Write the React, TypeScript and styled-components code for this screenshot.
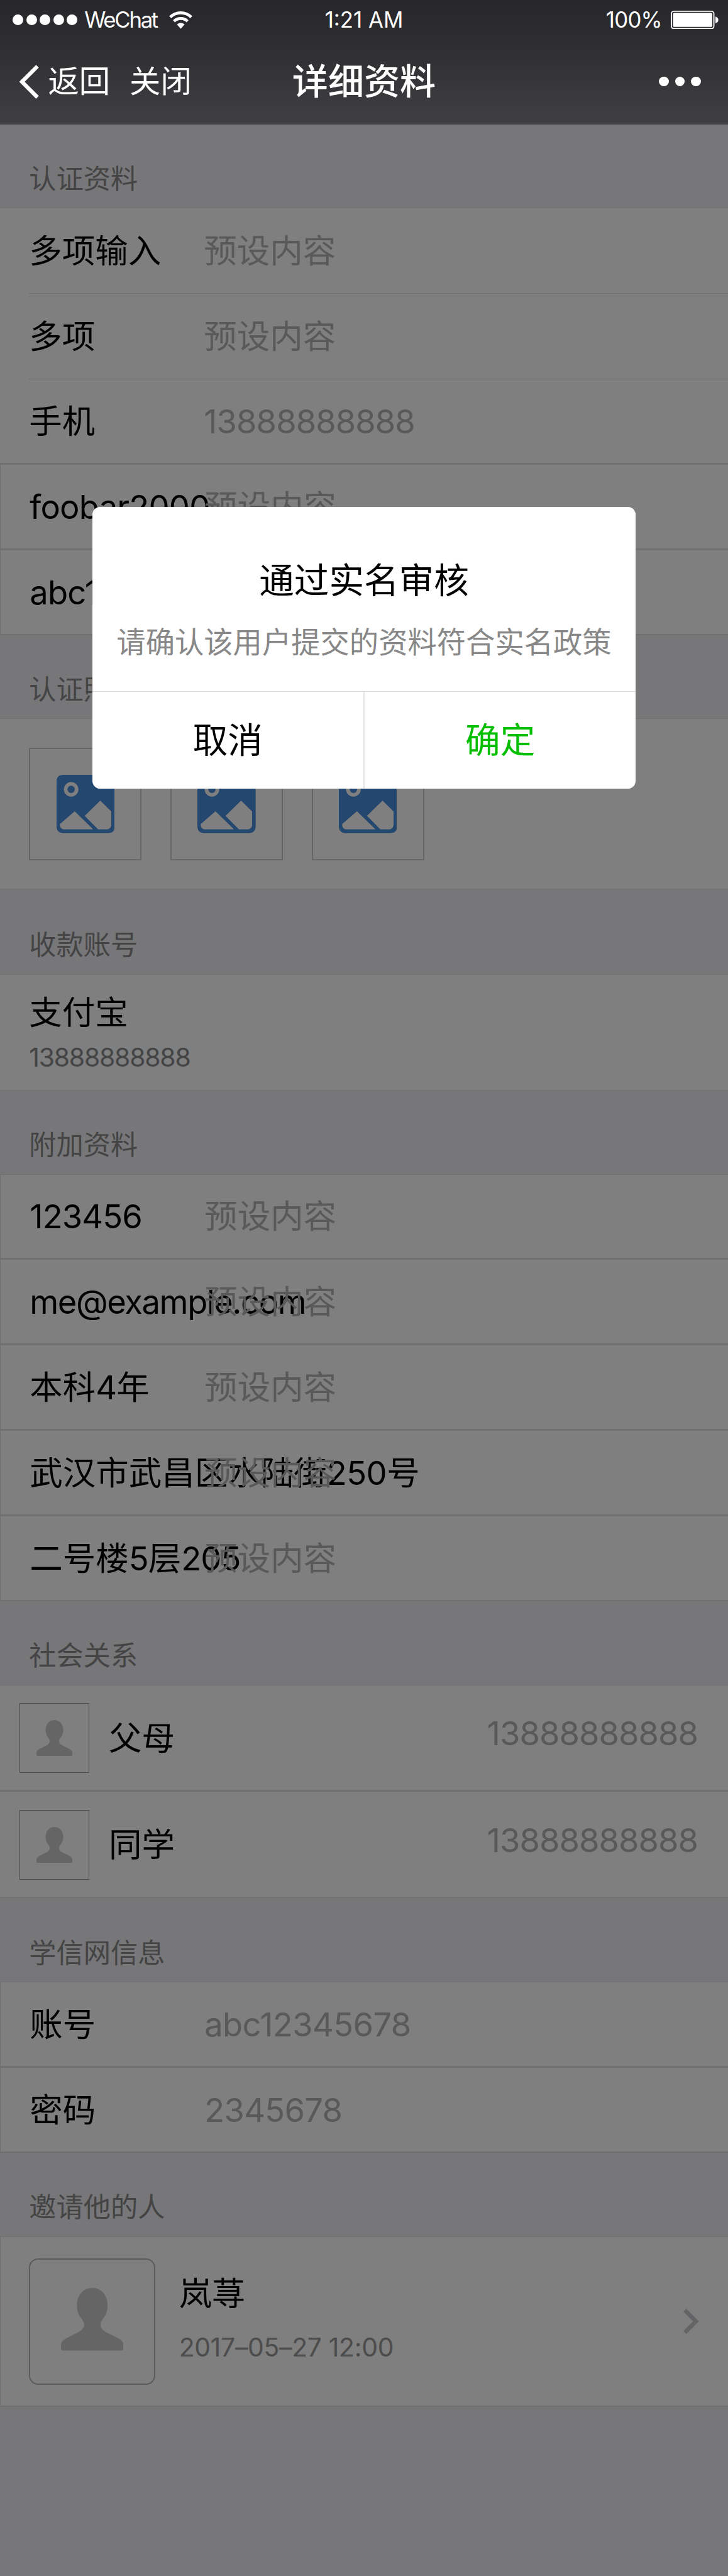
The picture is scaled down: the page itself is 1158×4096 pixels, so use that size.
import React from 'react';
import styled, { createGlobalStyle, css } from 'styled-components';

const SCALE = 0.772;
const u = (n: number) => `${+(n * SCALE).toFixed(3)}px`;

const GlobalStyle = createGlobalStyle`
  *, *::before, *::after { box-sizing: border-box; }
  html, body { margin: 0; padding: 0; background: #777779; }
  body {
    font-family: Inter, "Noto Sans CJK SC", sans-serif;
    color: #000;
    -webkit-font-smoothing: antialiased;
  }
`;

const Screen = styled.div`
  display: flex;
  flex-direction: column;
  width: 1158px;
  height: 4096px;
  overflow: hidden;
`;

/* ---------- top bar ---------- */

const Header = styled.header`
  flex: none;
  height: ${u(256)};
  background: linear-gradient(#27272b, #2e2e31 36%, #404044);
  color: #fff;
`;

const StatusBar = styled.div`
  display: grid;
  grid-template-columns: 1fr auto 1fr;
  align-items: center;
  height: ${u(82)};
  padding: 0 ${u(18)};
  font-size: ${u(45)};
  line-height: ${u(60)};
`;

const StatusGroup = styled.div<{ $end?: boolean }>`
  display: flex;
  align-items: center;
  justify-content: ${(p) => (p.$end ? 'flex-end' : 'flex-start')};
`;

const SignalDots = styled.div`
  display: flex;
  gap: ${u(6)};
  margin: 0 ${u(14)} 0 ${u(8)};
`;

const SignalDot = styled.i`
  width: ${u(22)};
  height: ${u(22)};
  border-radius: 50%;
  background: #fff;
`;

const StatusText = styled.span<{ $tracking: number }>`
  letter-spacing: ${(p) => p.$tracking}em;
  white-space: nowrap;
`;

const WifiIcon = styled.svg`
  width: ${u(48)};
  height: ${u(36)};
  margin-left: ${u(25)};
`;

const BatteryIcon = styled.svg`
  width: ${u(100)};
  height: ${u(38)};
  margin-left: ${u(18)};
`;

const NavBar = styled.nav`
  display: grid;
  grid-template-columns: 1fr auto 1fr;
  align-items: center;
  height: ${u(172)};
  padding: 0 ${u(40)};
`;

const NavActions = styled.div`
  display: flex;
  align-items: center;
  font-size: ${u(64)};
  line-height: ${u(80)};
`;

const BackIcon = styled.svg`
  width: ${u(40)};
  height: ${u(70)};
  margin-right: ${u(19)};
`;

const NavLink = styled.a`
  margin-right: ${u(40)};
  white-space: nowrap;
`;

const NavTitle = styled.h1`
  margin: 0;
  font-size: ${u(74)};
  font-weight: 500;
  line-height: ${u(90)};
`;

const MoreDots = styled.div`
  display: flex;
  justify-content: flex-end;
  gap: ${u(13)};
  margin-right: ${u(16)};
`;

const MoreDot = styled.i`
  width: ${u(20)};
  height: ${u(20)};
  border-radius: 50%;
  background: #fff;
`;

/* ---------- page ---------- */

const Page = styled.main`
  position: relative;
  flex: 1;
  background: #efeff4;
`;

const Mask = styled.div`
  position: absolute;
  inset: 0;
  background: rgba(0, 0, 0, 0.5);
`;

const SectionTitle = styled.h2`
  height: ${u(172)};
  margin: 0;
  padding: ${u(73)} 0 0 ${u(60)};
  font-size: ${u(56)};
  font-weight: 400;
  line-height: ${u(80)};
  color: #888;
`;

const cellBorders = css`
  border: solid #e0e0e0;
  border-width: 1px 0 2px 1px;
`;

const Cell = styled.div<{ $height: number; $flush?: boolean }>`
  display: flex;
  align-items: center;
  height: ${(p) => u(p.$height)};
  padding: 1px 0 0 ${u(60)};
  background: #fff;
  font-size: ${u(68)};
  line-height: ${u(96)};
  ${cellBorders}
  ${(p) => p.$flush && css`border-left-width: 0;`}
`;

const Divider = styled.hr`
  height: 1px;
  margin: 0 0 0 ${u(60)};
  border: 0;
  background: #e0e0e0;
`;

const PlainGroup = styled.section`
  background: #fff;
  border: solid #e0e0e0;
  border-width: 1px 0 2px;
`;

const PlainCell = styled.div<{ $last?: boolean }>`
  display: flex;
  align-items: center;
  height: ${(p) => (p.$last ? `calc(${u(176)} - 3px)` : `calc(${u(176)} - 1px)`)};
  padding-left: ${u(60)};
  font-size: ${u(68)};
  line-height: ${u(96)};
`;

const Label = styled.label`
  flex: none;
  width: ${u(360)};
  white-space: nowrap;
`;

const Value = styled.span`
  color: #b2b2b2;
  white-space: nowrap;
`;

const Latin = styled.span<{ $tracking: number }>`
  letter-spacing: ${(p) => p.$tracking}em;
`;

/* ---------- photos ---------- */

const PhotoStrip = styled.div`
  display: flex;
  gap: ${u(59)};
  height: ${u(352)};
  margin-bottom: ${u(2)};
  padding: ${u(59)} 0 0 ${u(60)};
  background: #fff;
  border: solid #e0e0e0;
  border-width: 1px 0;
`;

const PhotoBox = styled.div`
  display: flex;
  align-items: center;
  justify-content: center;
  width: ${u(232)};
  height: ${u(232)};
  border: 2px solid #ccc;
`;

const PhotoSvg = styled.svg`
  width: ${u(120)};
  height: ${u(120)};
`;

/* ---------- account ---------- */

const AccountCell = styled.div`
  height: ${u(240)};
  padding: ${u(31)} 0 0 ${u(60)};
  background: #fff;
  border: solid #e0e0e0;
  border-width: 1px 0;
`;

const AccountName = styled.div`
  font-size: ${u(68)};
  line-height: ${u(96)};
`;

const AccountNumber = styled.div`
  margin-top: ${u(4)};
  font-size: ${u(53)};
  line-height: ${u(80)};
  letter-spacing: -0.03em;
  color: #888;
`;

/* ---------- people ---------- */

const Avatar = styled.div<{ $large?: boolean }>`
  display: flex;
  flex: none;
  align-items: center;
  justify-content: center;
  width: ${(p) => u(p.$large ? 260 : 144)};
  height: ${(p) => u(p.$large ? 260 : 144)};
  border: ${(p) => (p.$large ? '2px solid #b8b8b8' : '1px solid #979797')};
  border-radius: ${(p) => (p.$large ? u(19) : 0)};
`;

const PersonSvg = styled.svg<{ $size: number; $lift?: number }>`
  width: ${(p) => u(p.$size)};
  height: ${(p) => u(p.$size)};
  margin-bottom: ${(p) => u(p.$lift ?? 0)};
`;

const RelationCell = styled(Cell)`
  padding: 1px ${u(62)} 0 ${u(40)};
`;

const RelationName = styled.span`
  flex: 1;
  margin-left: ${u(40)};
`;

const RelationPhone = styled(Value)`
  margin-bottom: ${u(20)};
`;

const InviterCell = styled(Cell)`
  padding-left: ${u(58.5)};
`;

const InviterText = styled.div`
  flex: 1;
  margin: 0 0 ${u(-12)} ${u(49)};
`;

const InviterName = styled.div`
  margin-top: ${u(-24)};
  line-height: ${u(96)};
`;

const InviterDate = styled.div`
  margin-top: ${u(23)};
  font-size: ${u(53)};
  line-height: ${u(80)};
  letter-spacing: -0.008em;
  color: #999;
`;

const ArrowIcon = styled.svg`
  width: ${u(32)};
  height: ${u(52)};
  margin-right: ${u(60)};
`;

/* ---------- dialog ---------- */

const Dialog = styled.div`
  position: absolute;
  top: ${u(788)};
  left: ${u(190)};
  display: flex;
  flex-direction: column;
  width: ${u(1120)};
  height: ${u(580)};
  border-radius: ${u(16)};
  background: #fff;
  text-align: center;
`;

const DialogBody = styled.div`
  height: ${u(380)};
  padding-top: ${u(101)};
`;

const DialogTitle = styled.div`
  font-size: ${u(72)};
  line-height: ${u(100)};
`;

const DialogText = styled.p`
  margin: ${u(33)} 0 0;
  font-size: ${u(60)};
  line-height: ${u(90)};
  white-space: nowrap;
  color: #888;
`;

const DialogActions = styled.div`
  display: flex;
  flex: 1;
  border-top: 1px solid #dcdcdc;
`;

const DialogButton = styled.button<{ $primary?: boolean }>`
  flex: 1;
  padding: 0 0 ${u(2)};
  border: 0;
  border-left: ${(p) => (p.$primary ? '2px solid #e5e5e5' : '0')};
  background: none;
  font: inherit;
  font-size: ${u(72)};
  line-height: ${u(100)};
  color: ${(p) => (p.$primary ? '#04be02' : '#000')};
`;

/* ---------- icons ---------- */

const Photo = () => (
  <PhotoBox>
    <PhotoSvg viewBox="0 0 120 120">
      <path
        fill="#478edc"
        fillRule="evenodd"
        d="M14 0H106Q120 0 120 14V106Q120 120 106 120H14Q0 120 0 106V14Q0 0 14 0ZM30 15A15 15 0 1 0 30 45A15 15 0 1 0 30 15ZM37.3 75L75.5 112.5H14Q8 111 7 105V101.5ZM90 53L112.7 75.5V104Q112 111 104.5 112.5H85.5L58 84.5Z"
      />
      <circle cx="30" cy="30" r="7.5" fill="#478edc" />
    </PhotoSvg>
  </PhotoBox>
);

const Person = ({ size, lift }: { size: number; lift?: number }) => (
  <PersonSvg $size={size} $lift={lift} viewBox="0 0 100 100">
    <path
      fill="#cacaca"
      d="M50 0C64 0 74.5 11 74.5 28C74.5 47 63 49 63 58.5C63 64 67 67 71 70L92 80.5C97 83.5 100 87 100 91V96Q100 100 96.5 100H3.5Q0 100 0 96V91C0 87 3 83.5 8 80.5L29 70C33 67 37 64 37 58.5C37 49 25.5 47 25.5 28C25.5 11 36 0 50 0Z"
    />
  </PersonSvg>
);

/* ---------- data ---------- */

interface Field {
  label: string;
  value: string;
  labelTrack?: number;
  valueTrack?: number;
}

const PRESET = '预设内容';

const basics: Field[] = [
  { label: '多项输入', value: PRESET },
  { label: '多项', value: PRESET },
  { label: '手机', value: '13888888888' },
];

const extraBasics: Field[] = [
  { label: 'foobar2000', value: PRESET, labelTrack: -0.015 },
  { label: 'abc123', value: PRESET, labelTrack: -0.015 },
];

const additional: Field[] = [
  { label: '123456', value: PRESET },
  { label: 'me@example.com', value: PRESET, labelTrack: -0.027 },
  { label: '本科4年', value: PRESET },
  { label: '武汉市武昌区水陆街250号', value: PRESET, labelTrack: -0.01 },
  { label: '二号楼5层205', value: PRESET },
];

const school: Field[] = [
  { label: '账号', value: 'abc12345678', valueTrack: -0.012 },
  { label: '密码', value: '2345678', valueTrack: -0.014 },
];

const relations = [
  { name: '父母', phone: '13888888888' },
  { name: '同学', phone: '13888888888' },
];

const splitLatin = (text: string, tracking = -0.018) =>
  text.split(/([\x21-\x7e]+)/).map((part, i) =>
    i % 2 ? (
      <Latin key={i} $tracking={tracking}>
        {part}
      </Latin>
    ) : (
      part
    ),
  );

const FieldContent = ({ label, value, labelTrack, valueTrack }: Field) => (
  <>
    <Label>{splitLatin(label, labelTrack)}</Label>
    <Value>{splitLatin(value, valueTrack)}</Value>
  </>
);

const BoxedFields = ({ fields }: { fields: Field[] }) => (
  <>
    {fields.map((f) => (
      <Cell key={f.label} $height={176}>
        <FieldContent {...f} />
      </Cell>
    ))}
  </>
);

export default function App() {
  return (
    <Screen>
      <GlobalStyle />
      <Header>
        <StatusBar>
          <StatusGroup>
            <SignalDots>
              {[0, 1, 2, 3, 4].map((i) => (
                <SignalDot key={i} />
              ))}
            </SignalDots>
            <StatusText $tracking={-0.066}>WeChat</StatusText>
            <WifiIcon viewBox="0 0 48 36">
              <g fill="none" stroke="#fff" strokeWidth="6">
                <path d="M2.2 12A31 31 0 0 1 45.8 12" />
                <path d="M10 20.5A20 20 0 0 1 38 20.5" />
              </g>
              <path fill="#fff" d="M24 36L16 27Q24 20.5 32 27Z" />
            </WifiIcon>
          </StatusGroup>
          <StatusText $tracking={0}>1:21 AM</StatusText>
          <StatusGroup $end>
            <StatusText $tracking={-0.02}>100%</StatusText>
            <BatteryIcon viewBox="0 0 100 38">
              <rect x="1.2" y="1.2" width="87.6" height="35.6" rx="5" fill="none" stroke="#fff" strokeWidth="2.4" />
              <rect x="4.5" y="4.5" width="81" height="29" rx="2.5" fill="#fff" />
              <path fill="#fff" d="M92 12Q98 14 98 19T92 26Z" />
            </BatteryIcon>
          </StatusGroup>
        </StatusBar>
        <NavBar>
          <NavActions>
            <BackIcon viewBox="0 0 40 70">
              <path d="M37 3L5 35L37 67" fill="none" stroke="#fff" strokeWidth="8" />
            </BackIcon>
            <NavLink>返回</NavLink>
            <NavLink>关闭</NavLink>
          </NavActions>
          <NavTitle>详细资料</NavTitle>
          <MoreDots>
            <MoreDot />
            <MoreDot />
            <MoreDot />
          </MoreDots>
        </NavBar>
      </Header>

      <Page>
        <SectionTitle>认证资料</SectionTitle>
        <PlainGroup>
          {basics.map((f, i) => (
            <React.Fragment key={f.label}>
              {i > 0 && <Divider />}
              <PlainCell $last={i === basics.length - 1}>
                <FieldContent {...f} />
              </PlainCell>
            </React.Fragment>
          ))}
        </PlainGroup>
        <BoxedFields fields={extraBasics} />

        <SectionTitle>认证照片</SectionTitle>
        <PhotoStrip>
          <Photo />
          <Photo />
          <Photo />
        </PhotoStrip>

        <SectionTitle>收款账号</SectionTitle>
        <AccountCell>
          <AccountName>支付宝</AccountName>
          <AccountNumber>13888888888</AccountNumber>
        </AccountCell>

        <SectionTitle>附加资料</SectionTitle>
        <BoxedFields fields={additional} />

        <SectionTitle>社会关系</SectionTitle>
        {relations.map((r) => (
          <RelationCell key={r.name} $height={220} $flush>
            <Avatar>
              <Person size={74} />
            </Avatar>
            <RelationName>{r.name}</RelationName>
            <RelationPhone>{splitLatin(r.phone)}</RelationPhone>
          </RelationCell>
        ))}

        <SectionTitle>学信网信息</SectionTitle>
        <BoxedFields fields={school} />

        <SectionTitle>邀请他的人</SectionTitle>
        <InviterCell $height={352}>
          <Avatar $large>
            <Person size={129} lift={9} />
          </Avatar>
          <InviterText>
            <InviterName>岚荨</InviterName>
            <InviterDate>2017–05–27 12:00</InviterDate>
          </InviterText>
          <ArrowIcon viewBox="0 0 32 52">
            <path d="M3 3L26 26L3 49" fill="none" stroke="#c8c8cd" strokeWidth="8.5" />
          </ArrowIcon>
        </InviterCell>

        <Mask />
        <Dialog>
          <DialogBody>
            <DialogTitle>通过实名审核</DialogTitle>
            <DialogText>请确认该用户提交的资料符合实名政策</DialogText>
          </DialogBody>
          <DialogActions>
            <DialogButton>取消</DialogButton>
            <DialogButton $primary>确定</DialogButton>
          </DialogActions>
        </Dialog>
      </Page>
    </Screen>
  );
}
